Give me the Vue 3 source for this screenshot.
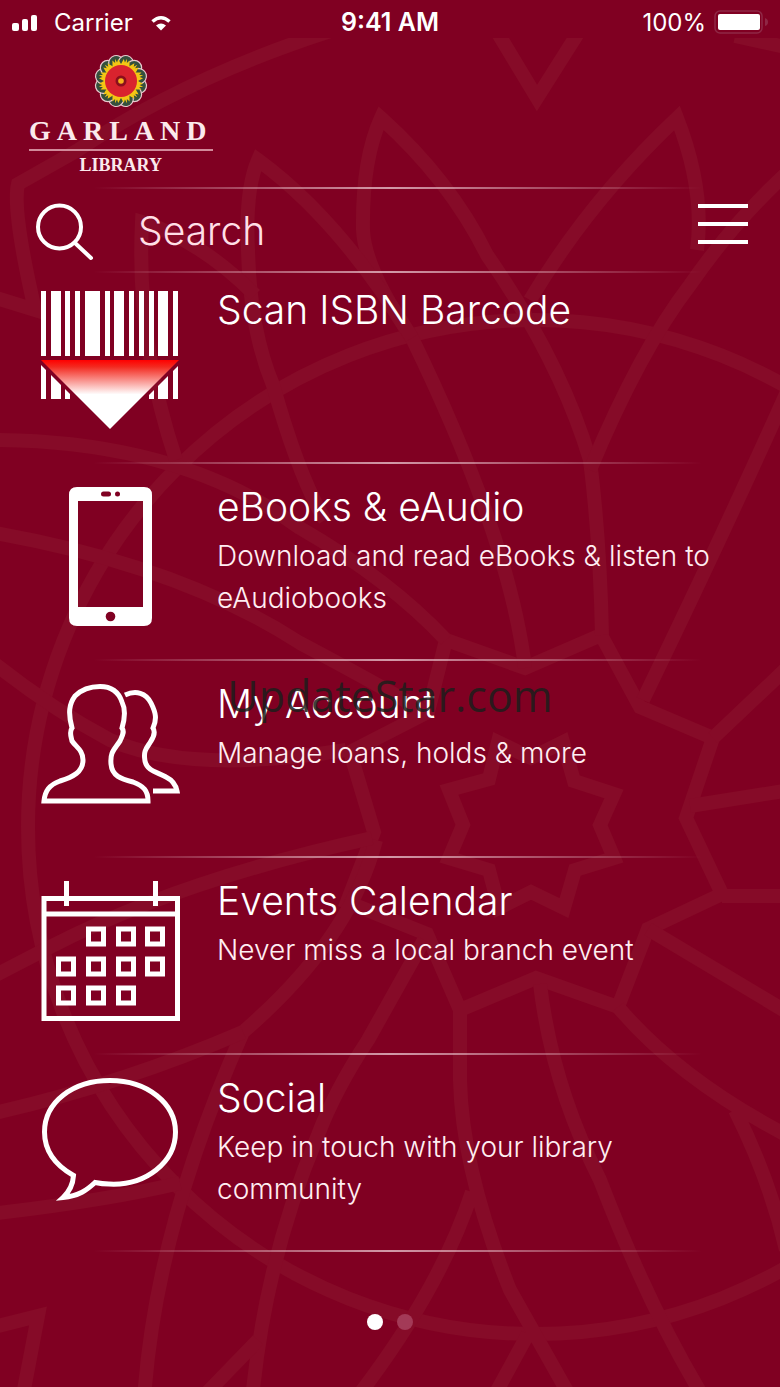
<script setup>
import { ref } from 'vue'

const query = ref('')
const page = ref(0)

const items = [
  { icon: 'barcode', title: 'Scan ISBN Barcode', text: '' },
  { icon: 'tablet', title: 'eBooks & eAudio', text: 'Download and read eBooks & listen to eAudiobooks' },
  { icon: 'people', title: 'My Account', text: 'Manage loans, holds & more', mark: 'UpdateStar.com' },
  { icon: 'calendar', title: 'Events Calendar', text: 'Never miss a local branch event' },
  { icon: 'bubble', title: 'Social', text: 'Keep in touch with your library community' },
]

const bars = [
  [1, 5], [11, 10], [25, 5], [35, 5], [45, 15], [65, 5],
  [74, 10], [89, 5], [99, 5], [109, 5], [118, 10], [133, 5],
]

const days = [
  [46, 46], [76, 46], [105, 46],
  [16, 76], [46, 76], [76, 76], [105, 76],
  [16, 105], [46, 105], [76, 105],
]

const petals = Array.from({ length: 12 }, (_, i) => i * 30)
</script>

<template>
  <div class="screen">
    <svg class="pattern" viewBox="0 0 780 1387" preserveAspectRatio="xMidYMin slice" aria-hidden="true">
      <defs>
        <clipPath id="below-status"><rect x="0" y="38" width="780" height="1349" /></clipPath>
      </defs>
      <g clip-path="url(#below-status)" fill="none" stroke="#860b28" stroke-width="14" stroke-linejoin="miter">
        <circle cx="535" cy="827" r="507" />
        <path d="M531 758L563 742L574 781L614 794L600 825L614 858L575 870L564 908L531 892L499 908L489 870L449 858L463 825L449 790L489 779L498 742Z" />
        <path d="M525 668L601 635L640 707L713 738L686 818L722 894L648 929L618 1007L536 978L460 1010L427 934L347 902L374 832L350 752L428 712L446 640Z" />
        <path d="M525 668Q510 540 412 338Q365 270 363 230Q362 160 381 118Q450 180 487 255Q560 360 590 460Q600 540 602 635" />
        <path d="M412 338Q340 220 258 160Q245 190 248 250Q250 330 273 385Q300 480 325 520" />
        <path d="M530 300Q590 200 677 118Q705 190 697 250" />
        <path d="M590 470Q640 350 690 285Q735 220 790 170" />
        <path d="M643 700Q730 520 790 385M713 738L790 665M690 806L790 790M722 896H790M648 929L790 1014" />
        <path d="M618 1007Q680 1080 790 1137M735 1110Q770 1180 786 1250" />
        <path d="M540 984Q552 1085 600 1180Q650 1310 705 1400" />
        <path d="M460 1010V1080Q462 1170 510 1290L572 1400M472 1192Q440 1290 355 1400M528 1334L492 1400" />
        <path d="M424 940L368 1040Q335 1090 318 1135Q265 1260 252 1400" />
        <path d="M376 840Q350 940 243 1032Q155 1230 144 1400M200 1400L258 1340" />
        <path d="M372 838Q180 880 50 947L-10 978M243 1032Q120 1085 -10 1114M-10 1214Q110 1200 180 1183" />
        <path d="M50 947L38 985" stroke="none" />
        <path d="M-10 1328L38 1316L22 1400" />
        <path d="M346 750Q190 775 110 740Q50 708 -10 660" />
        <path d="M-10 532Q180 565 300 643Q370 680 425 712" />
        <path d="M-10 440Q180 440 300 528Q390 580 446 640" />
        <path d="M340 28Q190 75 78 150L18 184Q12 210 35 310L-10 296" />
        <path d="M176 460Q136 340 142 222Q200 240 255 295" />
        <path d="M496 30L537 98L580 30M735 36L790 48" />
      </g>
    </svg>

    <div class="status">
      <div class="side">
        <svg width="28" height="18" viewBox="0 0 28 18" aria-hidden="true">
          <g fill="#fff">
            <rect x="0" y="10" width="7" height="8" rx="2" />
            <rect x="10" y="6" width="6" height="12" rx="2" />
            <rect x="19" y="2" width="6" height="16" rx="2" />
          </g>
        </svg>
        <span class="carrier">Carrier</span>
        <svg width="20" height="18" viewBox="0 0 20 18" aria-hidden="true">
          <path d="M1.500 8.500Q10 1 18.500 8.500" fill="none" stroke="#fff" stroke-width="3.500" />
          <path d="M5 12.500Q10 8.500 15 12.500L10 17.500Z" fill="#fff" />
        </svg>
      </div>
      <strong class="clock">9:41 AM</strong>
      <div class="side right">
        <span>100%</span>
        <svg width="54" height="26" viewBox="0 0 54 26" aria-hidden="true">
          <rect x="1" y="2" width="47" height="22" rx="5" fill="none" stroke="#8f2745" stroke-width="1.500" />
          <rect x="4" y="5" width="42" height="16" rx="2" fill="#fff" />
          <path d="M51 9Q54 10 54 13T51 17Z" fill="#8f2745" />
        </svg>
      </div>
    </div>

    <header class="logo">
      <svg width="54" height="54" viewBox="-27 -27 54 54" aria-hidden="true">
        <g fill="#34503d" stroke="#e9c9cf" stroke-width="1.200">
          <circle v-for="a in petals" :key="a" r="7.500" cx="18.600" :transform="`rotate(${a + 15})`" />
        </g>
        <circle r="20.500" fill="#34503d" />
        <g fill="#f3c614">
          <path v-for="a in petals" :key="a" d="M14-5L22-3L19-1L23 0L19 1L22 3L14 5Z" :transform="`rotate(${a + 15})`" />
        </g>
        <circle r="16" fill="#d9232e" />
        <circle r="5.500" fill="#8a0f1c" />
        <circle r="2.800" fill="#f6b21c" />
      </svg>
      <span class="garland">GARLAND</span>
      <span class="library">LIBRARY</span>
    </header>

    <form class="search" role="search" @submit.prevent>
      <label for="query" aria-label="Search">
        <svg width="60" height="60" viewBox="0 0 60 60" aria-hidden="true">
          <g fill="none" stroke="#fff" stroke-width="4" stroke-linecap="round">
            <circle cx="24.500" cy="25" r="21.500" />
            <path d="M40 41L56 56" />
          </g>
        </svg>
      </label>
      <input id="query" v-model="query" type="text" placeholder="Search">
      <button type="button" class="menu" aria-label="Menu">
        <svg width="50" height="40" viewBox="0 0 50 40" aria-hidden="true">
          <path d="M0 2H50M0 20H50M0 38H50" stroke="#fff" stroke-width="4" />
        </svg>
      </button>
    </form>

    <nav class="list">
      <a v-for="item in items" :key="item.title" class="row" href="#">
        <svg class="icon" viewBox="0 0 140 140" aria-hidden="true">
          <template v-if="item.icon === 'barcode'">
            <defs>
              <linearGradient id="beam" x1="0" y1="0" x2="0" y2="1">
                <stop offset="0" stop-color="#f00" />
                <stop offset="0.100" stop-color="#f32a20" />
                <stop offset="0.500" stop-color="#fff" />
              </linearGradient>
              <clipPath id="around-beam"><path d="M0 0H140V66H0ZM0 74L68 142H0ZM140 74L72 142H140Z" /></clipPath>
            </defs>
            <g fill="#fff" clip-path="url(#around-beam)">
              <rect v-for="b in bars" :key="b[0]" :x="b[0]" y="1" :width="b[1]" height="108" />
            </g>
            <path d="M1 70H139L70 139Z" fill="url(#beam)" />
          </template>
          <template v-else-if="item.icon === 'tablet'">
            <path fill="#fff" fill-rule="evenodd" d="M37 0H104Q112 0 112 8V131Q112 139 104 139H37Q29 139 29 131V8Q29 0 37 0ZM38 14V120H103V14Z" />
            <rect x="61" y="4.500" width="10" height="5" rx="2.500" fill="#800022" />
            <circle cx="77.500" cy="7" r="2.500" fill="#800022" />
            <circle cx="70.500" cy="129.500" r="4.800" fill="#800022" />
          </template>
          <g v-else-if="item.icon === 'people'" fill="none" stroke="#fff" stroke-width="5">
            <path d="M60 2.500C72 2.500 79 9 82 18C86 26 85 34 82 44C85 48 82 52 80 57C74 66 70 68 71 80C72 92 81 95 93 98C104 102 108 107 108 117H4C5 107 9 101 20 97C33 93 43 88 43 76C43 66 36 63 32 57C31 52 29 48 32 44C28 29 29 20 35 12C42 5 50 2.500 60 2.500Z" />
            <path d="M85 11C96 6 106 9 111 19C116 29 117 35 113 44C116 49 113 54 111 57C107 64 103 66 105 77C107 87 117 88 126 93C134 97 136 102 137 107H113" />
          </g>
          <g v-else-if="item.icon === 'calendar'" fill="none" stroke="#fff" stroke-width="5">
            <path d="M4 17.500H137.500V137.500H4ZM4 33H137.500M26.500 0V25M115.500 0V25" />
            <rect v-for="d in days" :key="d.join()" :x="d[0] + 2.500" :y="d[1] + 2" width="15" height="15" />
          </g>
          <path v-else fill="none" stroke="#fff" stroke-width="5" d="M33.500 97.500C15 87 4.500 72 4.500 54C4.500 24 33 2.500 70 2.500C108 2.500 135.500 26 135.500 54C135.500 84 106 108 69 106C64 106 60 105.500 55 104.500C47 112 39 118 23 119.500C29 114 33 106 33.500 97.500Z" />
        </svg>
        <span class="copy">
          <span class="title">{{ item.title }}</span>
          <span v-if="item.text" class="text">{{ item.text }}</span>
        </span>
        <span v-if="item.mark" class="mark">{{ item.mark }}</span>
      </a>
    </nav>

    <div class="dots">
      <button
        v-for="n in 2"
        :key="n"
        type="button"
        :class="{ on: page === n - 1 }"
        :aria-label="`Page ${n}`"
        @click="page = n - 1"
      />
    </div>
  </div>
</template>

<style>
body {
  margin: 0;
  background: #800022;
}
</style>

<style scoped>
.screen {
  --rule: linear-gradient(90deg, transparent 12%, rgba(255, 235, 240, 0.65) 50%, transparent 90%);
  position: relative;
  display: flex;
  flex-direction: column;
  min-height: 100vh;
  overflow: hidden;
  background: #800022;
  color: #fff;
  font-family: Inter, "Liberation Sans", sans-serif;
  font-weight: 300;
}

.screen > * {
  position: relative;
}

.screen > .pattern {
  position: absolute;
  inset: 0;
  width: 100%;
  height: 100%;
}

.status {
  display: grid;
  grid-template-columns: 1fr auto 1fr;
  align-items: center;
  height: 44px;
  padding: 0 12px;
  font-size: 24px;
  font-weight: 400;
}

.side {
  display: flex;
  align-items: center;
}

.carrier {
  margin: 0 18px 0 14px;
}

.right {
  justify-content: flex-end;
  gap: 8px;
}

.clock {
  font-size: 25px;
  font-weight: 600;
}

.logo {
  display: flex;
  flex-direction: column;
  align-items: center;
  align-self: flex-start;
  box-sizing: border-box;
  height: 143px;
  margin-left: 29px;
  padding-top: 10px;
  color: #fbe9ec;
  font-family: "Liberation Serif", serif;
  font-weight: 700;
}

.garland {
  padding: 9px 0 4px;
  border-bottom: 2px solid #d18a9a;
  font-size: 28px;
  line-height: 28px;
  letter-spacing: 6px;
}

.library {
  padding-top: 4px;
  font-size: 18px;
  line-height: 20px;
}

.search {
  display: flex;
  align-items: center;
  box-sizing: border-box;
  height: 86px;
  padding: 0 32px 0 35px;
  background: var(--rule) top / 100% 2px no-repeat, var(--rule) bottom / 100% 2px no-repeat;
}

.search label {
  display: flex;
  padding-top: 4px;
}

.search input {
  flex: 1;
  min-width: 0;
  padding: 0;
  margin-left: 43px;
  border: 0;
  outline: 0;
  background: none;
  color: #fff;
  font: inherit;
  font-size: 39px;
}

.search input::placeholder {
  color: #ffdfe6;
  opacity: 1;
}

.menu {
  display: flex;
  padding: 0 0 12px;
  border: 0;
  background: none;
}

.row {
  position: relative;
  display: flex;
  gap: 37px;
  box-sizing: border-box;
  min-height: 197px;
  padding: 23px 40px 16px;
  background: var(--rule) bottom / 100% 2px no-repeat;
  color: #fff;
  text-decoration: none;
}

.row:first-child {
  min-height: 191px;
  padding-top: 17px;
}

.icon {
  flex: none;
  width: 140px;
  height: 140px;
}

.copy {
  display: flex;
  flex-direction: column;
}

.title {
  font-size: 39px;
  line-height: 40px;
}

.text {
  padding-top: 8px;
  color: #ffeef2;
  font-size: 28px;
  line-height: 42px;
}

.mark {
  position: absolute;
  top: 7px;
  left: 0;
  right: 0;
  color: rgba(28, 30, 28, 0.85);
  font-family: "Open Sans", "Noto Sans", sans-serif;
  font-size: 43px;
  font-weight: 400;
  line-height: 56px;
  text-align: center;
  pointer-events: none;
}

.dots {
  display: flex;
  justify-content: center;
  gap: 14px;
  padding: 62px 0 56px;
}

.dots button {
  width: 16px;
  height: 16px;
  padding: 0;
  border: 0;
  border-radius: 50%;
  background: #a33a57;
}

.dots .on {
  background: #fff;
}
</style>
